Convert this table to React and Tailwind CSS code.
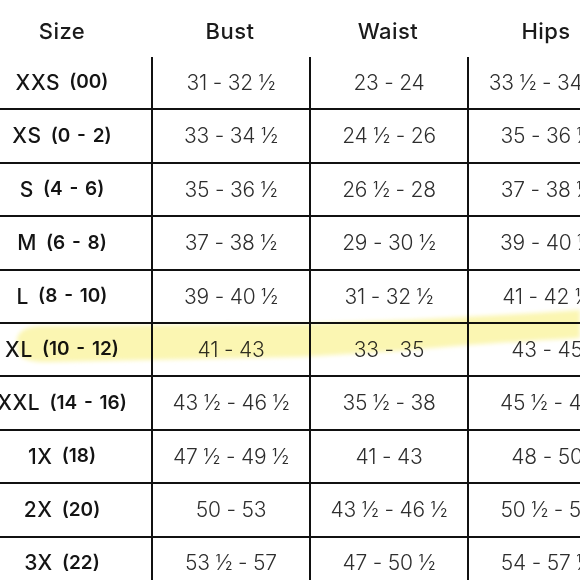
const rows = [
  { size: 'XXS', num: '(00)', bust: '31 - 32 ½', waist: '23 - 24', hips: '33 ½ - 34 ½' },
  { size: 'XS', num: '(0 - 2)', bust: '33 - 34 ½', waist: '24 ½ - 26', hips: '35 - 36 ½' },
  { size: 'S', num: '(4 - 6)', bust: '35 - 36 ½', waist: '26 ½ - 28', hips: '37 - 38 ½' },
  { size: 'M', num: '(6 - 8)', bust: '37 - 38 ½', waist: '29 - 30 ½', hips: '39 - 40 ½' },
  { size: 'L', num: '(8 - 10)', bust: '39 - 40 ½', waist: '31 - 32 ½', hips: '41 - 42 ½' },
  { size: 'XL', num: '(10 - 12)', bust: '41 - 43', waist: '33 - 35', hips: '43 - 45' },
  { size: 'XXL', num: '(14 - 16)', bust: '43 ½ - 46 ½', waist: '35 ½ - 38', hips: '45 ½ - 48' },
  { size: '1X', num: '(18)', bust: '47 ½ - 49 ½', waist: '41 - 43', hips: '48 - 50' },
  { size: '2X', num: '(20)', bust: '50 - 53', waist: '43 ½ - 46 ½', hips: '50 ½ - 53' },
  { size: '3X', num: '(22)', bust: '53 ½ - 57', waist: '47 - 50 ½', hips: '54 - 57 ½' },
];

const cols = 'grid grid-cols-[151px_158px_158px_158px] w-[625px]';
const cell = 'flex items-center justify-center border-l-2 border-[#111] whitespace-nowrap text-[21px] font-[350] text-[#2e2e2e] tracking-[-0.01em]';

function Highlight() {
  return (
    <svg className="absolute inset-0 pointer-events-none mix-blend-multiply" width="580" height="580">
      <defs>
        <filter id="soft">
          <feGaussianBlur stdDeviation="2" />
        </filter>
      </defs>
      <path
        d="M17,340 Q18,327 40,326 L300,324 Q440,320 580,310 L580,338 Q470,344 400,351 L300,357 L50,362 Q19,363 17,350 Z"
        fill="#fbf6b2"
        filter="url(#soft)"
      />
    </svg>
  );
}

export default function App() {
  return (
    <div className="relative w-[580px] h-[580px] overflow-hidden bg-white font-['Inter',sans-serif]">
      <div className={`${cols} h-[57px] pt-[5px] text-[22px] font-medium tracking-[0.02em] text-[#1a1a1a]`}>
        <div className="flex items-center justify-center pr-[27px]">Size</div>
        <div className="flex items-center justify-center">Bust</div>
        <div className="flex items-center justify-center">Waist</div>
        <div className="flex items-center justify-center">Hips</div>
      </div>
      {rows.map((r) => (
        <div key={r.size} className={`${cols} h-[53.4px] border-b-2 border-[#111]`}>
          <div className="flex items-center justify-center pr-[27px] whitespace-nowrap text-[#141414]">
            <span className="text-[21px] font-medium tracking-[0.03em]">{r.size}</span>
            <span className="ml-[9px] text-[19px] font-semibold [word-spacing:2px]">{r.num}</span>
          </div>
          <div className={cell}>{r.bust}</div>
          <div className={cell}>{r.waist}</div>
          <div className={cell}>{r.hips}</div>
        </div>
      ))}
      <Highlight />
    </div>
  );
}
